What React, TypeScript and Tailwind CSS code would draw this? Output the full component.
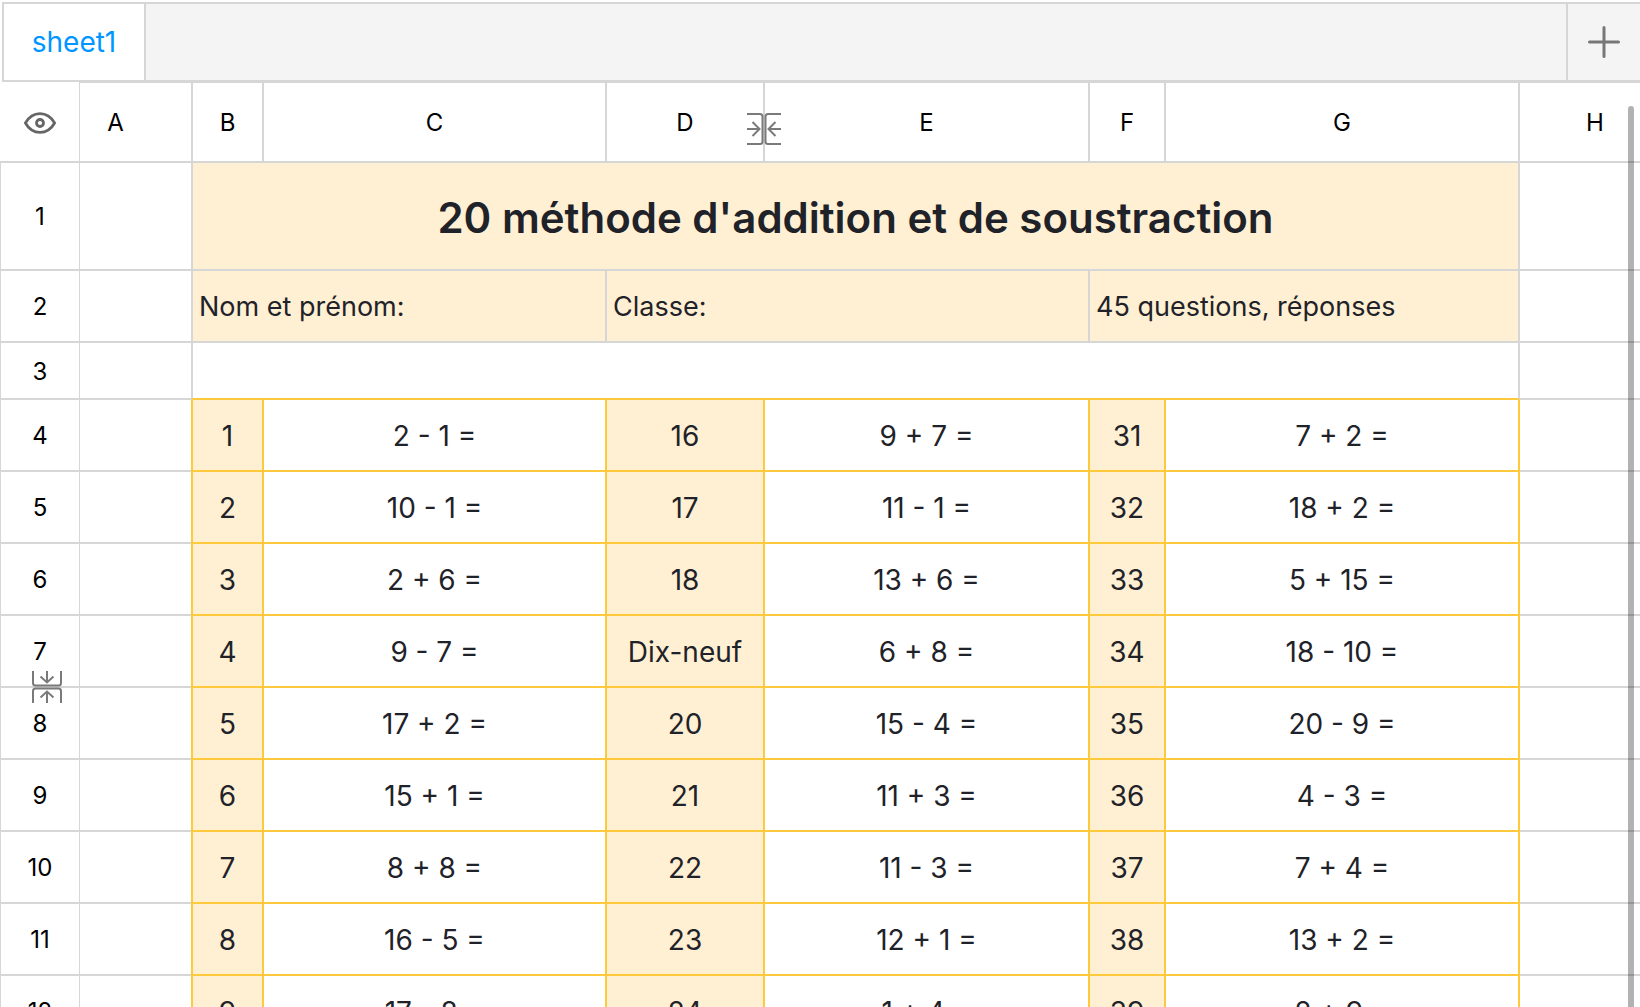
import React, { useState } from 'react';
import { clsx } from 'clsx';

interface QuestionRow {
  row: number;
  cells: string[];
}

const COLUMNS = ['B', 'C', 'D', 'E', 'F', 'G'];

const QUESTIONS: QuestionRow[] = [
  { row: 4, cells: ['1', '2 - 1 =', '16', '9 + 7 =', '31', '7 + 2 ='] },
  { row: 5, cells: ['2', '10 - 1 =', '17', '11 - 1 =', '32', '18 + 2 ='] },
  { row: 6, cells: ['3', '2 + 6 =', '18', '13 + 6 =', '33', '5 + 15 ='] },
  { row: 7, cells: ['4', '9 - 7 =', 'Dix-neuf', '6 + 8 =', '34', '18 - 10 ='] },
  { row: 8, cells: ['5', '17 + 2 =', '20', '15 - 4 =', '35', '20 - 9 ='] },
  { row: 9, cells: ['6', '15 + 1 =', '21', '11 + 3 =', '36', '4 - 3 ='] },
  { row: 10, cells: ['7', '8 + 8 =', '22', '11 - 3 =', '37', '7 + 4 ='] },
  { row: 11, cells: ['8', '16 - 5 =', '23', '12 + 1 =', '38', '13 + 2 ='] },
  { row: 12, cells: ['9', '17 - 8 =', '24', '1 + 4 =', '39', '2 + 9 ='] },
];

const EyeIcon = () => (
  <svg width="32" height="22" viewBox="0 0 32 22" fill="none" stroke="#666" strokeWidth="2.8">
    <path d="M1.4 11C4.8 5 10 1.6 16 1.6S27.2 5 30.6 11C27.2 17 22 20.4 16 20.4S4.8 17 1.4 11Z" strokeLinejoin="round" />
    <circle cx="16" cy="11" r="3.5" />
  </svg>
);

// Hidden columns/rows marker; the row variant is the same idea turned a quarter
const CollapsedColumnsIcon = () => (
  <svg width="34" height="32" viewBox="0 0 34 32" fill="none" stroke="#7a7a7a" strokeWidth="2">
    <path d="M0 1H13Q15.5 1 15.5 3.5V28.5Q15.5 31 13 31H0M34 1H21Q18.5 1 18.5 3.5V28.5Q18.5 31 21 31H34" />
    <path d="M0 16H12.5M5.500 9L12.500 16L5.500 23M34 16H21.500M28.500 9L21.500 16L28.500 23" />
  </svg>
);

const CollapsedRowsIcon = () => (
  <svg width="30" height="32" viewBox="0 0 30 32" fill="none" stroke="#7a7a7a" strokeWidth="2">
    <path d="M1 0V12Q1 14.5 3.5 14.5H26.5Q29 14.5 29 12V0M1 32V20Q1 17.5 3.5 17.5H26.5Q29 17.5 29 20V32" />
    <path d="M15 0V11.5M8.5 5.500L15 11.500L21.500 5.500M15 32V20.500M8.500 26.500L15 20.500L21.500 26.500" />
  </svg>
);

const RowHeader = ({ row }: { row: number }) => (
  <th scope="row" className="relative border-x border-b-2 border-[#d6d6d6] p-0 pt-0.5 text-2xl font-normal text-black">
    {row}
    {row === 7 && (
      <button aria-label="Show hidden rows" className="absolute -bottom-[17px] left-[31px] z-10">
        <CollapsedRowsIcon />
      </button>
    )}
  </th>
);

const BlankCell = () => <td className="border-b-2 border-[#d6d6d6] p-0" />;

export default function App() {
  const [activeSheet, setActiveSheet] = useState('sheet1');

  return (
    <div className="relative flex h-screen flex-col overflow-hidden bg-white font-['Inter',sans-serif] text-[28px] text-[#1f2329]">
      {/* Sheet tabs */}
      <nav className="mt-0.5 ml-0.5 flex h-20 shrink-0 border-y-2 border-l-2 border-[#d6d6d6] bg-[#f4f4f4]">
        <button
          onClick={() => setActiveSheet('sheet1')}
          className={clsx(
            'w-[142px] border-r-2 border-[#d6d6d6]',
            activeSheet === 'sheet1' ? 'bg-white text-[#0096ff]' : 'text-black'
          )}
        >
          sheet1
        </button>
        <div className="flex-1" />
        <button aria-label="Add sheet" className="flex w-[74px] items-center justify-center border-l-2 border-[#d6d6d6]">
          <svg width="32" height="32" viewBox="0 0 32 32" stroke="#777" strokeWidth="3" strokeLinecap="round">
            <path d="M16 1.5V30.5M1.5 16H30.5" />
          </svg>
        </button>
      </nav>

      {/* Grid */}
      <div className="min-h-0 flex-1 overflow-hidden">
        <table className="w-[calc(100%+30px)] table-fixed border-separate border-spacing-0">
          <colgroup>
            <col className="w-20" />
            <col className="w-[111px]" />
            <col className="w-[73px]" />
            <col className="w-[343px]" />
            <col className="w-[158px]" />
            <col className="w-[325px]" />
            <col className="w-[76px]" />
            <col className="w-[354px]" />
            <col />
          </colgroup>
          <thead>
            <tr className="h-[81px] text-2xl text-black">
              <th className="border-r border-b-2 border-[#d6d6d6] p-0 pt-0.5">
                <button aria-label="Show or hide" className="mx-auto block">
                  <EyeIcon />
                </button>
              </th>
              <th scope="col" className="border-t border-b-2 border-[#d6d6d6] p-0 pt-0.5 pr-10 font-normal">A</th>
              {COLUMNS.map((name) => (
                <th
                  key={name}
                  scope="col"
                  className={clsx(
                    'relative border-t border-r-2 border-b-2 border-[#d6d6d6] p-0 pt-0.5 font-normal',
                    name === 'B' && 'border-l-2'
                  )}
                >
                  {name}
                  {name === 'D' && (
                    <button aria-label="Show hidden columns" className="absolute top-[30px] -right-[18px] z-10">
                      <CollapsedColumnsIcon />
                    </button>
                  )}
                </th>
              ))}
              <th scope="col" className="border-t border-b-2 border-[#d6d6d6] p-0 pt-0.5 font-normal">H</th>
            </tr>
          </thead>
          <tbody>
            <tr className="h-[108px]">
              <RowHeader row={1} />
              <BlankCell />
              <td colSpan={6} className="border-x-2 border-b-2 border-[#d6d6d6] bg-[#fff0d4] p-0 pt-0.5 text-center text-[42px] font-semibold">
                20 méthode d'addition et de soustraction
              </td>
              <BlankCell />
            </tr>
            <tr className="h-[72px] text-[27px]">
              <RowHeader row={2} />
              <BlankCell />
              <td colSpan={2} className="border-x-2 border-b-2 border-[#d6d6d6] bg-[#fff0d4] px-1.5 pt-0.5 pb-0">Nom et prénom:</td>
              <td colSpan={2} className="border-r-2 border-b-2 border-[#d6d6d6] bg-[#fff0d4] px-1.5 pt-0.5 pb-0">Classe:</td>
              <td colSpan={2} className="border-r-2 border-b-2 border-[#d6d6d6] bg-[#fff0d4] px-1.5 pt-0.5 pb-0">45 questions, réponses</td>
              <BlankCell />
            </tr>
            <tr className="h-[57px]">
              <RowHeader row={3} />
              <BlankCell />
              <td colSpan={6} className="border-x-2 border-b-2 border-[#d6d6d6] border-b-[#ffc93c] p-0" />
              <BlankCell />
            </tr>
            {QUESTIONS.map(({ row, cells }) => (
              <tr key={row} className="h-[72px]">
                <RowHeader row={row} />
                <BlankCell />
                {cells.map((text, i) => (
                  <td
                    key={i}
                    className={clsx(
                      'border-r-2 border-b-2 border-[#ffc93c] p-0 pt-0.5 text-center',
                      i === 0 && 'border-l-2',
                      i % 2 === 0 && 'bg-[#fff0d4]'
                    )}
                  >
                    {text}
                  </td>
                ))}
                <BlankCell />
              </tr>
            ))}
          </tbody>
        </table>
      </div>

      {/* Scrollbar thumb */}
      <div className="absolute top-[106px] right-1.5 bottom-0 w-1.5 rounded-t-full bg-black/30" />
    </div>
  );
}
